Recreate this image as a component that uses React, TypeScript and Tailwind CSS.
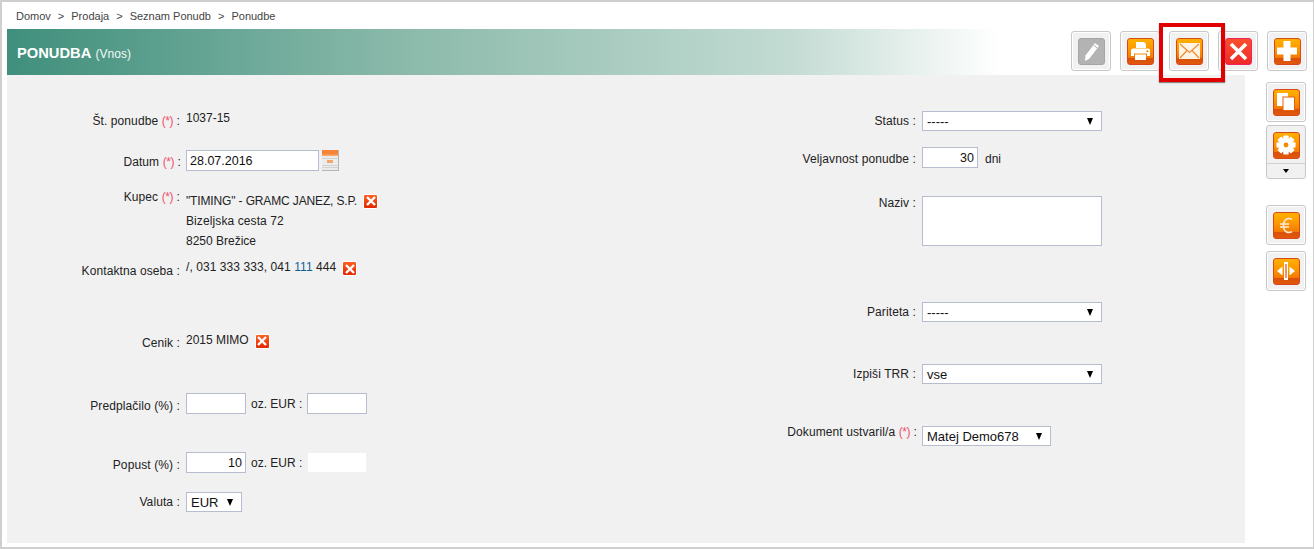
import type { ReactNode } from "react";

const orange =
  "bg-[linear-gradient(#ffb000_0%,#fb9500_45%,#f27805_76%,#d9500a_77%,#e0590c_100%)] border-[#d8481a]";

function TbButton({ children, cls = orange }: { children: ReactNode; cls?: string }) {
  return (
    <div className="flex h-10 w-10 items-center justify-center rounded-[3px] border border-[#c8c8c8] bg-[#f1f1f1] shadow-[inset_0_0_0_1px_#fff]">
      <div className={`flex h-[27px] w-[27px] items-center justify-center rounded-[3px] border ${cls}`}>
        {children}
      </div>
    </div>
  );
}

function Pencil() {
  return (
    <svg width="19" height="21" viewBox="0 0 19 21">
      <path d="M13 2l4 3-9.5 12.5L3 20l.5-5.5z" fill="#fff" />
      <path d="M11.6 4.2l3.9 3" stroke="#b0b0b0" strokeWidth="1" />
    </svg>
  );
}

function Printer() {
  return (
    <svg width="19" height="20" viewBox="0 0 19 20">
      <path d="M5 1h8l2 2v4H5z" fill="#fff" />
      <path d="M2 7.5h15a2 2 0 012 2V15h-3v-2.5H3V15H0V9.500a2 2 0 012-2z" fill="#fff" />
      <rect x="4" y="13.500" width="11" height="5.500" fill="#fff" />
      <rect x="15.500" y="9.500" width="2" height="1.500" fill="#f27805" />
    </svg>
  );
}

function Mail() {
  return (
    <svg width="21" height="16" viewBox="0 0 21 16">
      <rect x="0" y="0" width="21" height="16" fill="#fff3e4" />
      <path d="M1 1l9.500 8.500L20 1M1 15l7-7.500M20 15l-7-7.500" fill="none" stroke="#f08a30" strokeWidth="1.200" />
    </svg>
  );
}

function BigX() {
  return (
    <svg width="21" height="21" viewBox="0 0 21 21">
      <path d="M3 3l15 15M18 3L3 18" stroke="#fff" strokeWidth="3.600" />
    </svg>
  );
}

function Plus() {
  return (
    <svg width="20" height="20" viewBox="0 0 20 20">
      <path d="M6.500 0h7v6.500H20v7h-6.500V20h-7v-6.500H0v-7h6.500z" fill="#fff" />
    </svg>
  );
}

function Copy() {
  return (
    <svg width="18" height="18" viewBox="0 0 18 18">
      <rect x="0" y="0" width="11" height="13" fill="#fff" />
      <rect x="6" y="4" width="11.500" height="13.500" fill="#fff" stroke="#e2610c" strokeWidth="1" />
    </svg>
  );
}

function Gear() {
  return (
    <svg width="20" height="20" viewBox="0 0 23 23">
      <g fill="#fff">
        <circle cx="11.500" cy="11.500" r="7.800" />
        <rect x="8.400" y="0.500" width="6.200" height="22" rx="1" />
        <rect x="8.400" y="0.500" width="6.200" height="22" rx="1" transform="rotate(45 11.500 11.500)" />
        <rect x="8.400" y="0.500" width="6.200" height="22" rx="1" transform="rotate(90 11.500 11.500)" />
        <rect x="8.400" y="0.500" width="6.200" height="22" rx="1" transform="rotate(135 11.500 11.500)" />
      </g>
      <circle cx="11.500" cy="11.500" r="2.800" fill="#f58a00" />
    </svg>
  );
}

function Euro() {
  return (
    <svg width="13" height="17" viewBox="0 0 13 17">
      <path d="M12 2.200C8 .4 3.500 2 3.500 8.500s4.500 8.100 8.500 6.300" fill="none" stroke="#ffe9d6" strokeWidth="1.600" />
      <path d="M0 7h9M0 10h9" stroke="#ffe9d6" strokeWidth="1.300" />
    </svg>
  );
}

function Arrows() {
  return (
    <svg width="20" height="20" viewBox="0 0 20 20">
      <rect x="8" y="1" width="4" height="18" fill="#fff" />
      <rect x="9.300" y="3" width="1.400" height="14" fill="#ef6a10" />
      <path d="M6.500 5.500v9L1 10zM13.500 5.500v9L19 10z" fill="#fff" />
    </svg>
  );
}

function SmallX({ cls = "" }: { cls?: string }) {
  return (
    <span className={`inline-flex h-[15px] w-[15px] shrink-0 items-center justify-center rounded-[2px] border border-white bg-[linear-gradient(#ff5f22,#e02800)] ${cls}`}>
      <svg width="12" height="12" viewBox="0 0 12 12">
        <path d="M2 2l8 8M10 2l-8 8" stroke="#fff" strokeWidth="2.400" />
      </svg>
    </span>
  );
}

function Calendar() {
  return (
    <div className="ml-[3px] flex h-[21px] w-[17px] flex-col border-b border-r border-[#b5b5b5] bg-[#ececec]">
      <div className="h-[6px] bg-[linear-gradient(#f8843a_0%,#f8843a_60%,#fbb27a_100%)]" />
      <div className="flex flex-1 flex-col justify-around py-px">
        <div className="h-px bg-[#d2d2d2]" />
        <div className="mx-auto h-[3px] w-[6px] bg-[#f7a468]" />
        <div className="h-px bg-[#d2d2d2]" />
        <div className="h-px bg-[#d2d2d2]" />
      </div>
    </div>
  );
}

function Req() {
  return <span className="tracking-[-0.4px] text-[#f0506e]">(*)</span>;
}

function Label({ children, w, pt }: { children: ReactNode; w: string; pt: string }) {
  return <div className={`${w} ${pt} shrink-0 text-right leading-4 tracking-[0.1px] whitespace-nowrap`}>{children}</div>;
}

function TextBox({ w, value = "", right = false }: { w: string; value?: string; right?: boolean }) {
  return (
    <input
      readOnly
      value={value}
      className={`${w} h-[21px] border border-[#b8bccf] bg-white px-[3px] text-[12.5px] text-[#111] outline-none ${right ? "text-right" : ""}`}
    />
  );
}

function Select({ w, value }: { w: string; value: string }) {
  return (
    <div className={`${w} relative h-5 border border-[#b8bccf] bg-white pl-1 text-[13px] leading-[20px] text-[#111]`}>
      {value}
      <span className="absolute right-2 top-[6px] h-0 w-0 border-x-[3.5px] border-t-[7px] border-x-transparent border-t-black" />
    </div>
  );
}

export default function App() {
  return (
    <div className="h-[549px] w-[1314px] overflow-hidden border-2 border-r-[1px] border-[#cfcfcf] bg-white font-['Liberation_Sans',Arial,sans-serif] text-xs text-[#222]">
      <div className="flex h-[27px] items-center pl-[14px] pt-px text-[11px] text-[#444]">
        <span>Domov</span>
        <span className="mx-[7px]">&gt;</span>
        <span>Prodaja</span>
        <span className="mx-[7px]">&gt;</span>
        <span>Seznam Ponudb</span>
        <span className="mx-[7px]">&gt;</span>
        <span>Ponudbe</span>
      </div>

      <div className="ml-[5px] flex h-[46px] items-start justify-between bg-[linear-gradient(90deg,#3f8f7c_0%,#8ab9aa_30%,#c3dbd3_60%,#ffffff_76%)]">
        <div className="pl-[10px] pt-[15px] leading-[18px] text-white">
          <span className="text-[14.7px] font-bold">PONUDBA</span>{" "}
          <span className="ml-px text-xs text-[#f4f9f7]">(Vnos)</span>
        </div>
        <div className="relative mr-[6px] mt-[2px] flex gap-[9px]">
          <TbButton cls="bg-[#b3b3b3] border-[#a5a5a5]">
            <Pencil />
          </TbButton>
          <TbButton>
            <Printer />
          </TbButton>
          <TbButton>
            <Mail />
          </TbButton>
          <TbButton cls="bg-[linear-gradient(#f9502a,#ee2a2a)] border-[#f0245a]">
            <BigX />
          </TbButton>
          <TbButton>
            <Plus />
          </TbButton>
          <div className="absolute left-[88px] top-[-8px] h-[59px] w-[66px] border-[4px] border-[#e00000] shadow-[0_1px_1px_#888]" />
        </div>
      </div>

      <div className="flex">
        <div className="ml-[5px] flex h-[468px] w-[1238px] justify-between bg-[#f1f1f1]">
          <div className="w-[640px]">
            <div className="mt-[35px] flex h-4 gap-[6px]">
              <Label w="w-[173px]" pt="pt-[3px]">
                Št. ponudbe <Req /> :
              </Label>
              <div className="leading-4">1037-15</div>
            </div>
            <div className="mt-[24px] flex items-start gap-[5px]">
              <Label w="w-[174px]" pt="pt-[4px]">
                Datum <Req /> :
              </Label>
              <div className="flex">
                <TextBox w="w-[133px]" value="28.07.2016" />
                <Calendar />
              </div>
            </div>
            <div className="mt-[17px] flex gap-[6px]">
              <Label w="w-[173px]" pt="pt-px">
                Kupec <Req /> :
              </Label>
              <div className="pt-[3px] leading-5">
                <div className="flex items-center gap-[6px] tracking-[-0.14px]">
                  "TIMING" - GRAMC JANEZ, S.P. <SmallX />
                </div>
                <div className="tracking-[0.1px]">Bizeljska cesta 72</div>
                <div>8250 Brežice</div>
              </div>
            </div>
            <div className="mt-[8px] flex gap-[6px]">
              <Label w="w-[173px]" pt="pt-[4px]">
                Kontaktna oseba :
              </Label>
              <div className="flex h-4 items-center gap-[6px] leading-4 tracking-[0.07px]">
                <span>
                  /, 031 333 333, 041 <span className="text-[#0f5f94]">111</span> 444
                </span>
                <SmallX cls="mt-[3px]" />
              </div>
            </div>
            <div className="mt-[53px] flex gap-[6px]">
              <Label w="w-[173px]" pt="pt-[3px]">
                Cenik :
              </Label>
              <div className="flex h-4 items-center gap-[6px] leading-4">
                2015 MIMO <SmallX cls="mt-[2px]" />
              </div>
            </div>
            <div className="mt-[42px] flex items-start gap-[5px]">
              <div className="flex gap-[6px]">
                <Label w="w-[173px]" pt="pt-[5px]">
                  Predplačilo (%) :
                </Label>
                <TextBox w="w-[60px]" />
              </div>
              <div className="pt-[3px] leading-4">oz. EUR :</div>
              <TextBox w="w-[60px]" />
            </div>
            <div className="mt-[38px] flex items-start gap-[5px]">
              <div className="flex gap-[6px]">
                <Label w="w-[173px]" pt="pt-[5px]">
                  Popust (%) :
                </Label>
                <TextBox w="w-[60px]" value="10" right />
              </div>
              <div className="pt-[3px] leading-4">oz. EUR :</div>
              <div className="ml-px mt-px h-[19px] w-[58px] bg-white" />
            </div>
            <div className="mt-[19px] flex items-start gap-[6px]">
              <Label w="w-[173px]" pt="pt-[2px]">
                Valuta :
              </Label>
              <Select w="w-[56px]" value="EUR" />
            </div>
          </div>

          <div className="w-[495px]">
            <div className="mt-[36px] flex items-start gap-[6px]">
              <Label w="w-[166px]" pt="pt-[2px]">
                Status :
              </Label>
              <Select w="w-[180px]" value="-----" />
            </div>
            <div className="mt-[16px] flex items-start gap-[6px]">
              <Label w="w-[166px]" pt="pt-[4px]">
                Veljavnost ponudbe :
              </Label>
              <TextBox w="w-[56px]" value="30" right />
              <div className="pl-[1px] pt-[4px] leading-4">dni</div>
            </div>
            <div className="mt-[28px] flex items-start gap-[6px]">
              <Label w="w-[166px]" pt="-mt-px">
                Naziv :
              </Label>
              <div className="h-[50px] w-[180px] border border-[#b8bccf] bg-white" />
            </div>
            <div className="mt-[56px] flex items-start gap-[6px]">
              <Label w="w-[166px]" pt="pt-[2px]">
                Pariteta :
              </Label>
              <Select w="w-[180px]" value="-----" />
            </div>
            <div className="mt-[42px] flex items-start gap-[6px]">
              <Label w="w-[166px]" pt="pt-[2px]">
                Izpiši TRR :
              </Label>
              <Select w="w-[180px]" value="vse" />
            </div>
            <div className="mt-[42px] flex items-start gap-[5px]">
              <Label w="w-[167px]" pt="-mt-[2px]">
                Dokument ustvaril/a <Req /> :
              </Label>
              <Select w="w-[129px]" value="Matej Demo678" />
            </div>
          </div>
        </div>

        <div className="ml-[21px] flex w-10 flex-col pt-[7px]">
          <TbButton>
            <Copy />
          </TbButton>
          <div className="mt-[3px] flex h-[54px] w-10 flex-col overflow-hidden rounded-[3px] border border-[#c8c8c8] bg-[#f1f1f1]">
            <div className="flex h-[38px] items-center justify-center border-b border-[#d0d0d0] pt-[1px]">
              <div className={`flex h-[27px] w-[27px] items-center justify-center rounded-[3px] border ${orange}`}>
                <Gear />
              </div>
            </div>
            <div className="flex flex-1 items-center justify-center">
              <span className="h-0 w-0 border-x-[3.5px] border-t-[4px] border-x-transparent border-t-black" />
            </div>
          </div>
          <div className="mt-[26px]">
            <TbButton>
              <Euro />
            </TbButton>
          </div>
          <div className="mt-[6px]">
            <TbButton>
              <Arrows />
            </TbButton>
          </div>
        </div>
      </div>
    </div>
  );
}
